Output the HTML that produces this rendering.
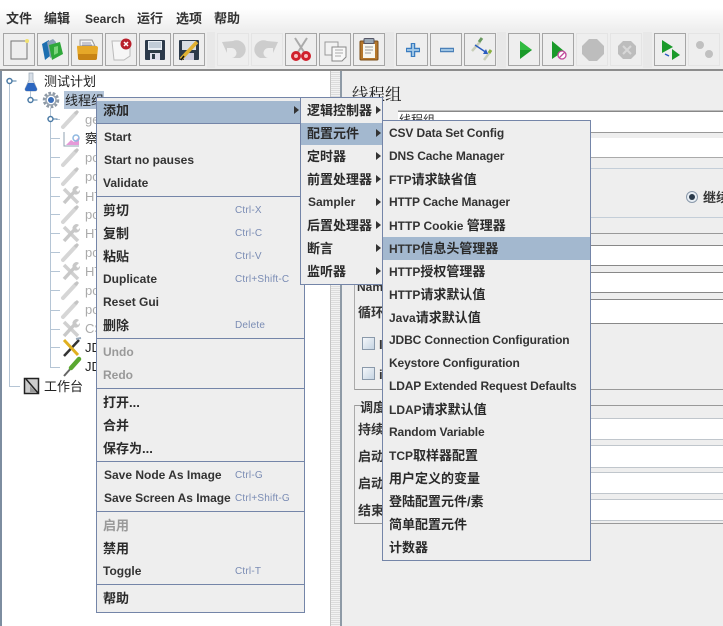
<!DOCTYPE html>
<html><head><meta charset="utf-8"><style>
html,body{margin:0;padding:0}
body{width:723px;height:626px;position:relative;overflow:hidden;background:#eee;font-family:"Liberation Sans","Noto Sans CJK SC",sans-serif}
div{position:absolute}
.l{height:1px}
.t{white-space:nowrap;font-size:13px;line-height:20px;height:20px;color:#222;margin-top:1px}
.m{background:#eee;border:1px solid #7485a8;box-sizing:border-box}
.r{left:6px;white-space:nowrap;font-size:12px;font-weight:bold;line-height:20px;height:20px;color:#333}
.c{font-size:13px;color:#2a2a2a;margin-top:1px}
.c b{font-size:12px;color:#333}
.k{left:138px;font-size:10px;font-weight:normal;color:#7a8cb4;letter-spacing:.2px;margin-top:1px}
.s{left:0;right:0;height:1px;background:#7485a8}
.h{left:0;right:0;height:22px;background:#a3b8cf}
.d{color:#999}
.b{width:30px;height:31px;border:1px solid #a5a5a5;background:#eee;top:33px}
.b.x{border-color:#e4e4e4}
.a{width:0;height:0;border-left:5px solid #333;border-top:4px solid transparent;border-bottom:4px solid transparent}
.w{background:#fff;left:591px;width:132px}
.n .r:not(.c){letter-spacing:-.12px}
</style></head><body>
<div style="left:0;top:0;width:723px;height:31px;background:linear-gradient(#fff 0,#fff 8px,#eee 30px)"></div>
<div class="t" style="left:6px;top:8px;font-weight:bold;color:#333">文件</div>
<div class="t" style="left:44px;top:8px;font-weight:bold;color:#333">编辑</div>
<div class="t" style="left:85px;top:8px;font-size:12px;font-weight:bold;color:#333">Search</div>
<div class="t" style="left:137px;top:8px;font-weight:bold;color:#333">运行</div>
<div class="t" style="left:176px;top:8px;font-weight:bold;color:#333">选项</div>
<div class="t" style="left:214px;top:8px;font-weight:bold;color:#333">帮助</div>

<div style="left:207px;top:32px;width:8px;height:36px;background:#e8e8e8"></div>
<div style="left:385px;top:32px;width:9px;height:36px;background:#e8e8e8"></div>
<div style="left:497px;top:32px;width:9px;height:36px;background:#e8e8e8"></div>
<div style="left:643px;top:32px;width:9px;height:36px;background:#e8e8e8"></div>

<div class="b" style="left:3px"></div><div class="b" style="left:37px"></div><div class="b" style="left:71px"></div><div class="b" style="left:105px"></div><div class="b" style="left:139px"></div><div class="b" style="left:173px"></div>
<div class="b x" style="left:217px"></div><div class="b x" style="left:251px"></div>
<div class="b" style="left:285px"></div><div class="b" style="left:319px"></div><div class="b" style="left:353px"></div>
<div class="b" style="left:396px"></div><div class="b" style="left:430px"></div><div class="b" style="left:464px"></div>
<div class="b" style="left:508px"></div><div class="b" style="left:542px"></div><div class="b x" style="left:576px"></div><div class="b x" style="left:610px"></div>
<div class="b" style="left:654px"></div><div class="b x" style="left:688px"></div>

<div style="left:0;top:69px;width:723px;height:2px;background:#8c8c8c"></div>

<!-- tree pane -->
<div style="left:0;top:71px;width:331px;height:555px;background:#fff"></div>
<div style="left:0;top:71px;width:2px;height:555px;background:#7d8da0"></div>
<div style="left:330px;top:71px;width:10px;height:555px;background:repeating-linear-gradient(#f2f2f2 0 1px,#dcdcdc 1px 2px);border-left:1px solid #c4c4c4;box-sizing:border-box"></div>
<div style="left:340px;top:71px;width:2px;height:555px;background:#8e9aa6"></div>

<!-- right pane -->
<div class="t" style="left:352px;top:84px;font-size:16.500px;font-family:'Liberation Serif','Noto Serif CJK SC',serif;color:#222">线程组</div>
<div class="l" style="left:398px;top:110px;width:325px;background:#bbb"></div>
<div class="l" style="left:398px;top:111px;width:325px;background:#888"></div>
<div style="left:398px;top:112px;width:325px;height:20px;background:#fff"></div>
<div class="t" style="left:399px;top:109px;font-size:12px;color:#333">线程组</div>
<div class="l" style="left:398px;top:132px;width:325px;background:#999"></div>
<div style="left:398px;top:138px;width:325px;height:19px;background:#fff"></div>
<div class="l" style="left:398px;top:157px;width:325px;background:#aaa"></div>
<div class="l" style="left:354px;top:168px;width:369px;background:#c4ced8"></div>
<div class="l" style="left:354px;top:217px;width:369px;background:#c4ced8"></div>
<div class="l" style="left:354px;top:233px;width:369px;background:#999"></div>
<div class="l" style="left:398px;top:245px;width:325px;background:#888"></div>
<div class="w" style="top:246px;height:19px"></div>
<div class="l" style="left:398px;top:265px;width:325px;background:#888"></div>
<div class="l" style="left:398px;top:272px;width:325px;background:#888"></div>
<div class="w" style="top:273px;height:19px"></div>
<div class="l" style="left:398px;top:292px;width:325px;background:#888"></div>
<div class="l" style="left:398px;top:299px;width:325px;background:#888"></div>
<div class="w" style="top:300px;height:23px"></div>
<div class="l" style="left:398px;top:323px;width:325px;background:#888"></div>
<div class="l" style="left:354px;top:389px;width:369px;background:#999"></div>
<div style="left:354px;top:270px;width:1px;height:120px;background:#aaa"></div>
<div class="l" style="left:354px;top:405px;width:369px;background:#999"></div>
<div style="left:354px;top:405px;width:1px;height:119px;background:#aaa"></div>
<div class="l" style="left:354px;top:523px;width:369px;background:#999"></div>
<div class="l" style="left:591px;top:418px;width:132px;background:#c0c6cc"></div>
<div class="w" style="top:419px;height:20px"></div>
<div class="l" style="left:591px;top:439px;width:132px;background:#c0c6cc"></div>
<div class="l" style="left:591px;top:445px;width:132px;background:#c0c6cc"></div>
<div class="w" style="top:446px;height:21px"></div>
<div class="l" style="left:591px;top:467px;width:132px;background:#c0c6cc"></div>
<div class="l" style="left:591px;top:472px;width:132px;background:#c0c6cc"></div>
<div class="w" style="top:473px;height:20px"></div>
<div class="l" style="left:591px;top:493px;width:132px;background:#c0c6cc"></div>
<div class="l" style="left:591px;top:499px;width:132px;background:#c0c6cc"></div>
<div class="w" style="top:500px;height:20px"></div>
<div class="l" style="left:591px;top:520px;width:132px;background:#c0c6cc"></div>
<div class="t" style="left:703px;top:187px;font-weight:bold;color:#333">继续</div>
<div class="t" style="left:357px;top:276px;font-size:12px;font-weight:bold;color:#333">Nam</div>
<div class="t" style="left:358px;top:302px;font-weight:bold;color:#333">循环</div>
<div style="left:362px;top:337px;width:13px;height:13px;border:1px solid #8a99aa;background:linear-gradient(135deg,#f4f7fa,#c6d4e2);box-sizing:border-box"></div>
<div class="t" style="left:379px;top:334px;font-weight:bold;color:#333">I</div>
<div style="left:362px;top:367px;width:13px;height:13px;border:1px solid #8a99aa;background:linear-gradient(135deg,#f4f7fa,#c6d4e2);box-sizing:border-box"></div>
<div class="t" style="left:379px;top:364px;font-weight:bold;color:#333">i</div>
<div class="t" style="left:360px;top:397px;font-weight:bold;color:#333;background:#eee">调度</div>
<div class="t" style="left:358px;top:419px;font-weight:bold;color:#333">持续</div>
<div class="t" style="left:358px;top:446px;font-weight:bold;color:#333">启动</div>
<div class="t" style="left:358px;top:473px;font-weight:bold;color:#333">启动</div>
<div class="t" style="left:358px;top:500px;font-weight:bold;color:#333">结束</div>

<!-- tree selection + text -->
<div style="left:64px;top:91px;width:40px;height:18px;background:#b3c4d8"></div>
<div class="t" style="left:44px;top:71px">测试计划</div>
<div class="t" style="left:65px;top:90px">线程组</div>
<div class="t" style="left:85px;top:109px;color:#aaa">ge</div>
<div class="t" style="left:85px;top:128px">察</div>
<div class="t" style="left:85px;top:147px;color:#aaa">pc</div>
<div class="t" style="left:85px;top:166px;color:#aaa">pc</div>
<div class="t" style="left:85px;top:186px;color:#aaa">HT</div>
<div class="t" style="left:85px;top:204px;color:#aaa">pc</div>
<div class="t" style="left:85px;top:223px;color:#aaa">HT</div>
<div class="t" style="left:85px;top:242px;color:#aaa">pc</div>
<div class="t" style="left:85px;top:261px;color:#aaa">HT</div>
<div class="t" style="left:85px;top:280px;color:#aaa">pc</div>
<div class="t" style="left:85px;top:299px;color:#aaa">pc</div>
<div class="t" style="left:85px;top:318px;color:#aaa">CS</div>
<div class="t" style="left:85px;top:337px">JD</div>
<div class="t" style="left:85px;top:356px">JD</div>
<div class="t" style="left:44px;top:376px">工作台</div>

<svg width="723" height="626" style="position:absolute;left:0;top:0" xmlns="http://www.w3.org/2000/svg">
<defs>
<g id="pen"><path d="M1 17 L14 3" stroke="#d6d6d6" stroke-width="4" stroke-linecap="round"/><path d="M13 4 L16 1" stroke="#c4c4c4" stroke-width="3"/></g>
<g id="tool"><path d="M2 3 L16 17" stroke="#d0d0d0" stroke-width="3.500"/><path d="M2 17 L13 5" stroke="#c8c8c8" stroke-width="3.500"/><path d="M11 6 A4 4 0 0 1 17 1 L14 4 L16 6 L18 4 A4 4 0 0 1 12 8Z" fill="#c8c8c8"/></g>
<g id="h"><circle cx="0" cy="0" r="2.500" fill="#fff" stroke="#4d7ca6" stroke-width="1.500"/><path d="M3 0H7" stroke="#4d7ca6"/></g>
</defs>
<!-- tree lines -->
<g stroke="#b5c5d5" fill="none">
<path d="M9.500 84V386.500H20"/><path d="M30.500 88V100"/><path d="M50.500 108V367.500"/>
<path d="M50 138.500H60M50 157.500H60M50 177.500H60M50 196.500H60M50 214.500H60M50 233.500H60M50 252.500H60M50 271.500H60M50 290.500H60M50 310.500H60M50 329.500H60M50 347.500H60M50 367.500H60"/>
<path d="M56 119.500H60"/>
</g>
<use href="#h" x="9.500" y="81"/><use href="#h" x="30.500" y="100"/><use href="#h" x="50.500" y="119"/>
<!-- root flask -->
<path d="M29 73H33V80L37 89Q37 91 35 91H27Q25 91 25 89L29 80Z" fill="#d8dfe8" stroke="#9aa7b5" stroke-width=".7"/>
<path d="M28 83H34L37 89Q37 91 35 91H27Q25 91 25 89Z" fill="#2c66c0"/>
<!-- gear -->
<circle cx="51" cy="100" r="6.500" fill="none" stroke="#8f9aa6" stroke-width="3.500" stroke-dasharray="2.500 1.500"/>
<circle cx="51" cy="100" r="5" fill="#fff" stroke="#9aa5b0" stroke-width="1.500"/><circle cx="51" cy="100" r="3" fill="#3a6eb8"/>
<use href="#pen" x="62" y="110"/><use href="#pen" x="62" y="148"/><use href="#pen" x="62" y="167"/><use href="#tool" x="62" y="186"/><use href="#pen" x="62" y="205"/><use href="#tool" x="62" y="224"/><use href="#pen" x="62" y="243"/><use href="#tool" x="62" y="262"/><use href="#pen" x="62" y="281"/><use href="#pen" x="62" y="300"/><use href="#tool" x="62" y="319"/>
<!-- chart -->
<path d="M64 132V146H79" stroke="#8fa0b0" fill="none"/><path d="M66 145L71 140L74 142L79 137V145Z" fill="#e59ad8"/><circle cx="76" cy="138" r="3" fill="none" stroke="#8fb8e0" stroke-width="1.500"/>
<!-- JD icons -->
<path d="M64 356L79 340" stroke="#333" stroke-width="2.500"/><path d="M64 340L78 355" stroke="#e0b020" stroke-width="3"/><path d="M76 339L81 338" stroke="#9ab" stroke-width="2"/>
<path d="M64 376L72 367" stroke="#666" stroke-width="2"/><path d="M71 368L79 359" stroke="#5aa830" stroke-width="4.500" stroke-linecap="round"/>
<!-- workbench -->
<rect x="24.500" y="378.500" width="14" height="15" fill="#ccc" stroke="#222" stroke-width="1.500"/><path d="M26 379L38 393" stroke="#222" stroke-width="1.500"/><path d="M30 386V392H36Z" fill="#999"/>

<!-- toolbar icons -->
<rect x="11" y="41" width="16" height="18" fill="#eee" stroke="#777"/><circle cx="27" cy="41" r="2" fill="#f0e070"/>
<g><path d="M42 44L49 40L50 56L45 60Z" fill="#1d6fb0"/><path d="M47 42L53 39L56 42V55L50 58Z" fill="#8aa0b8"/><path d="M49 45L60 42L63 54L52 60Z" fill="#2fa83a"/><path d="M54 47L58 46V53L54 55Z" fill="#7cd47c"/></g>
<path d="M80 40H92L95 46H80Z" fill="#f4f4f4" stroke="#999"/><path d="M82 43H91M82 45H92" stroke="#99a"/><path d="M77 47Q77 45 79 46H96Q98 46 98 48L97 58Q97 60 95 60H80Q78 60 78 58Z" fill="#e6a828"/><path d="M78 54H97V58Q97 60 95 60H80Q78 60 78 58Z" fill="#c88414"/>
<path d="M112 41H124L130 48V56L124 60L114 60Z" fill="#f6f6f6" stroke="#bbb"/><circle cx="126" cy="44" r="5.500" fill="#b8202c"/><path d="M124 42L128 46M128 42L124 46" stroke="#fff" stroke-width="1.500"/>
<g id="fl"><rect x="145" y="40" width="20" height="20" rx="1" fill="#2c3a4a"/><rect x="148" y="41" width="14" height="9" fill="#e8eef4"/><path d="M149 43H161M149 45H161M149 47H161" stroke="#9ab"/><rect x="150" y="53" width="10" height="7" fill="#dde"/><rect x="152" y="54" width="3" height="5" fill="#2c3a4a"/></g>
<rect x="179" y="40" width="20" height="20" rx="1" fill="#2c3a4a"/><rect x="182" y="41" width="14" height="9" fill="#d8dee4"/><rect x="184" y="53" width="10" height="7" fill="#ccd"/><path d="M181 59L197 42" stroke="#e0b030" stroke-width="3.500"/><path d="M181 60L184 56" stroke="#111" stroke-width="1.500"/>
<path d="M222 42L233 41A9 9 0 0 1 240 58L232 58A5 5 0 0 0 231 48H227V53Z" fill="#cdcdcd"/>
<path d="M278 42L267 41A9 9 0 0 0 260 58L268 58A5 5 0 0 1 269 48H273V53Z" fill="#cdcdcd"/>
<path d="M295 38L304 52M307 38L298 52" stroke="#aaa" stroke-width="2"/><circle cx="296" cy="56" r="3.500" fill="#f5c0c0" stroke="#d0202c" stroke-width="3"/><circle cx="306" cy="56" r="3.500" fill="#f5c0c0" stroke="#d0202c" stroke-width="3"/>
<rect x="325" y="42" width="13" height="13" fill="#f2f2f2" stroke="#999"/><path d="M332 47H346V57L342 61H332Z" fill="#f8f8f8" stroke="#888"/><path d="M335 50H343M335 53H343M335 56H341" stroke="#aaa"/>
<rect x="360" y="41" width="18" height="19" rx="1" fill="#b5782c" stroke="#7a4e18"/><rect x="364" y="38.500" width="10" height="5" rx="1" fill="#9aa8b4" stroke="#556"/><rect x="363" y="44" width="12" height="14" fill="#f8f8f0"/><path d="M365 47H373M365 50H373M365 53H371" stroke="#999"/>
<path d="M413 43V57M406 50H420" stroke="#3a7cc0" stroke-width="4.500"/><path d="M413 44V56M407 50H419" stroke="#a8cce8" stroke-width="1.800"/>
<path d="M440 50H454" stroke="#4a80b8" stroke-width="4.500"/><path d="M441 50H453" stroke="#a8cce8" stroke-width="1.800"/>
<path d="M472 51L480 42" stroke="#c8ceb8" stroke-width="2.500"/><path d="M479 42L482 38" stroke="#6a9a60" stroke-width="3"/><path d="M484 60L490 52" stroke="#c8ceb8" stroke-width="2.500"/><path d="M489 53L491 50" stroke="#8ab040" stroke-width="3"/><path d="M475 45L487 53" stroke="#2a5cc0" stroke-width="1.500"/><path d="M488 54L483 54L486 49Z" fill="#2a5cc0"/>
<path d="M520 41L532 50L520 59Z" fill="#1a9a2a"/><path d="M520 41L532 50L520 50Z" fill="#30bb40"/>
<path d="M552 41L564 51L552 59Z" fill="#1a9a2a"/><circle cx="562" cy="55" r="4" fill="#fff" stroke="#c0489a" stroke-width="1.300"/><path d="M559 58L565 52" stroke="#c0489a" stroke-width="1.300"/>
<path d="M589 39H597L604 46V54L597 61H589L582 54V46Z" fill="#bdbdbd"/>
<path d="M623 41H631L636 46V54L631 59H623L618 54V46Z" fill="#bdbdbd"/><path d="M623 46L631 54M631 46L623 54" stroke="#d8d8d8" stroke-width="2"/>
<path d="M662 40L673 47L662 53Z" fill="#1a9a2a"/><path d="M672 49L680 55L672 60Z" fill="#1a9a2a"/><path d="M665 54L669 56" stroke="#2a5cc0" stroke-width="1.500"/>
<circle cx="700" cy="45" r="4" fill="#c0c0c0"/><circle cx="709" cy="54" r="4" fill="#c0c0c0"/>
<!-- radio -->
<circle cx="692" cy="197" r="5.500" fill="#e8eef4" stroke="#8a99aa"/><circle cx="692" cy="197" r="3" fill="#2a3a4a"/>
</svg>

<!-- Menu 1 -->
<div class="m" style="left:96px;top:97px;width:209px;height:516px">
<div class="h" style="top:3px"></div>
<div class="a" style="left:197px;top:8px"></div>
<div class="r c" style="top:2px">添加</div>
<div class="s" style="top:25px"></div>
<div class="r" style="left:7px;top:29px">Start</div>
<div class="r" style="left:7px;top:52px">Start no pauses</div>
<div class="r" style="top:75px">Validate</div>
<div class="s" style="top:98px"></div>
<div class="r c" style="top:102px">剪切</div><div class="r k" style="top:102px">Ctrl-X</div>
<div class="r c" style="top:125px">复制</div><div class="r k" style="top:125px">Ctrl-C</div>
<div class="r c" style="top:148px">粘贴</div><div class="r k" style="top:148px">Ctrl-V</div>
<div class="r" style="top:171px">Duplicate</div><div class="r k" style="top:171px">Ctrl+Shift-C</div>
<div class="r" style="top:194px">Reset Gui</div>
<div class="r c" style="top:217px">删除</div><div class="r k" style="top:217px">Delete</div>
<div class="s" style="top:240px"></div>
<div class="r d" style="top:244px">Undo</div>
<div class="r d" style="top:267px">Redo</div>
<div class="s" style="top:290px"></div>
<div class="r c" style="top:294px">打开...</div>
<div class="r c" style="top:317px">合并</div>
<div class="r c" style="top:340px">保存为...</div>
<div class="s" style="top:363px"></div>
<div class="r" style="left:7px;top:367px">Save Node As Image</div><div class="r k" style="top:367px">Ctrl-G</div>
<div class="r" style="left:7px;top:390px;letter-spacing:-.05px">Save Screen As Image</div><div class="r k" style="top:390px">Ctrl+Shift-G</div>
<div class="s" style="top:413px"></div>
<div class="r c" style="top:417px;color:#999">启用</div>
<div class="r c" style="top:440px">禁用</div>
<div class="r" style="top:463px">Toggle</div><div class="r k" style="top:463px">Ctrl-T</div>
<div class="s" style="top:486px"></div>
<div class="r c" style="top:490px">帮助</div>
</div>

<!-- Menu 2 -->
<div class="m" style="left:300px;top:97px;width:83px;height:188px">
<div class="h" style="top:25px"></div>
<div class="r c" style="top:2px">逻辑控制器</div><div class="a" style="left:75px;top:8px"></div>
<div class="r c" style="top:25px">配置元件</div><div class="a" style="left:75px;top:31px"></div>
<div class="r c" style="top:48px">定时器</div><div class="a" style="left:75px;top:54px"></div>
<div class="r c" style="top:71px">前置处理器</div><div class="a" style="left:75px;top:77px"></div>
<div class="r" style="left:7px;top:94px">Sampler</div><div class="a" style="left:75px;top:100px"></div>
<div class="r c" style="top:117px">后置处理器</div><div class="a" style="left:75px;top:123px"></div>
<div class="r c" style="top:140px">断言</div><div class="a" style="left:75px;top:146px"></div>
<div class="r c" style="top:163px">监听器</div><div class="a" style="left:75px;top:169px"></div>
</div>

<!-- Menu 3 -->
<div class="m n" style="left:382px;top:120px;width:209px;height:441px">
<div class="h" style="top:116px;height:23px"></div>
<div class="r" style="top:2px">CSV Data Set Config</div>
<div class="r" style="top:25px">DNS Cache Manager</div>
<div class="r c" style="top:48px"><b>FTP</b>请求缺省值</div>
<div class="r" style="top:71px">HTTP Cache Manager</div>
<div class="r c" style="top:94px"><b>HTTP Cookie </b>管理器</div>
<div class="r c" style="top:117px"><b>HTTP</b>信息头管理器</div>
<div class="r c" style="top:140px"><b>HTTP</b>授权管理器</div>
<div class="r c" style="top:163px"><b>HTTP</b>请求默认值</div>
<div class="r c" style="top:186px"><b>Java</b>请求默认值</div>
<div class="r" style="top:209px">JDBC Connection Configuration</div>
<div class="r" style="top:232px">Keystore Configuration</div>
<div class="r" style="top:255px">LDAP Extended Request Defaults</div>
<div class="r c" style="top:278px"><b>LDAP</b>请求默认值</div>
<div class="r" style="top:301px">Random Variable</div>
<div class="r c" style="top:324px"><b>TCP</b>取样器配置</div>
<div class="r c" style="top:347px">用户定义的变量</div>
<div class="r c" style="top:370px">登陆配置元件/素</div>
<div class="r c" style="top:393px">简单配置元件</div>
<div class="r c" style="top:416px">计数器</div>
</div>
</body></html>
